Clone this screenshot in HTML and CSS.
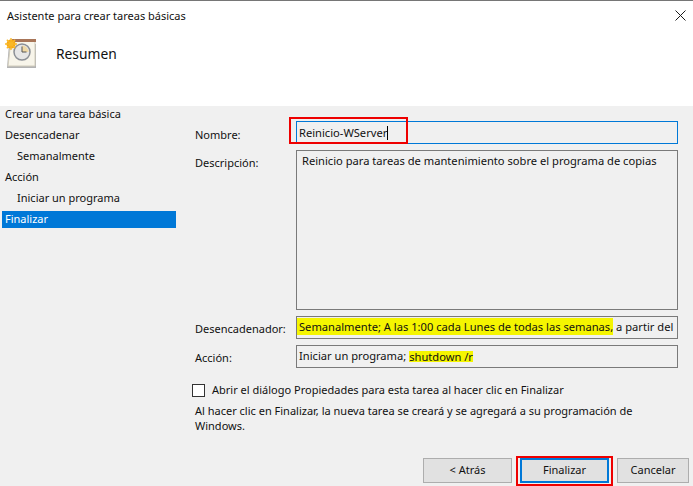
FILE: index.html
```html
<!DOCTYPE html>
<html lang="es">
<head>
<meta charset="utf-8">
<title>Asistente para crear tareas básicas</title>
<link rel="stylesheet" href="styles.css">
</head>
<body>
<div class="window">
  <header class="head">
    <div class="titlebar">
      <span class="title">Asistente para crear tareas básicas</span>
      <svg class="close" width="11" height="11" viewBox="0 0 11 11"><path d="M.5.5l10 10M10.500.5l-10 10" stroke="#1a1a1a" fill="none"/></svg>
    </div>
    <div class="banner">
      <svg class="task-icon" width="32" height="34" viewBox="0 0 32 34">
        <path d="M4 8h27v24H2z" fill="#b3b3b3"/>
        <path d="M6 4h24v26H3z" fill="#f8f5ea" stroke="#d2cdbd"/>
        <rect x="7" y="3" width="24" height="3" fill="#a87558"/>
        <circle cx="17" cy="16" r="8" fill="#e6e6e6" stroke="#8b8f96" stroke-width="1.500"/>
        <path d="M17 16V9.500A6.500 6.500 0 0 1 23.500 16z" fill="#f0d9a6"/>
        <path d="M17 10.500V16h4.500" stroke="#555" fill="none"/>
        <circle cx="6" cy="8" r="4.500" fill="#f9a70f"/>
        <path d="M6 2v12M0 8h12M1.800 3.800l8.400 8.400M10.200 3.800l-8.400 8.400" stroke="#f9b928" stroke-width="1.300"/>
      </svg>
      <h1 class="heading">Resumen</h1>
    </div>
  </header>
  <main class="body">
    <nav class="nav">
      <div class="nav-item">Crear una tarea básica</div>
      <div class="nav-item">Desencadenar</div>
      <div class="nav-item sub">Semanalmente</div>
      <div class="nav-item">Acción</div>
      <div class="nav-item sub">Iniciar un programa</div>
      <div class="nav-item active">Finalizar</div>
    </nav>
    <section class="content">
      <div class="form">
        <label class="lbl lbl-name">Nombre:</label>
        <div class="field field-name">Reinicio-WServer<span class="caret"></span><span class="mark-name"></span></div>
        <label class="lbl">Descripción:</label>
        <div class="field field-desc">Reinicio para tareas de mantenimiento sobre el programa de copias</div>
        <label class="lbl lbl-trigger">Desencadenador:</label>
        <div class="field field-line"><mark class="hl hl-trigger">Semanalmente; A las 1:00 cada Lunes de todas las semanas,</mark> a partir del</div>
        <label class="lbl lbl-action">Acción:</label>
        <div class="field field-line field-action">Iniciar un programa; <mark class="hl hl-action">shutdown /r</mark></div>
      </div>
      <div class="check-row"><span class="check"></span><span>Abrir el diálogo Propiedades para esta tarea al hacer clic en Finalizar</span></div>
      <p class="note">Al hacer clic en Finalizar, la nueva tarea se creará y se agregará a su programación de Windows.</p>
      <div class="buttons">
        <div class="btn btn-wide">&lt; Atrás</div>
        <div class="btn btn-wide btn-primary">Finalizar<span class="mark-btn"></span></div>
        <div class="btn btn-cancel">Cancelar</div>
      </div>
    </section>
  </main>
</div>
</body>
</html>
```
FILE: styles.css
```css
* { box-sizing: border-box; }
html, body { margin: 0; height: 100%; }
body { font: 11px/16px "Noto Sans", "Open Sans", sans-serif; color: #111; background: #f0f0f0; overflow: hidden; }
.window { width: 693px; height: 486px; display: flex; flex-direction: column; overflow: hidden; }
.head { height: 106px; background: #fff; border-top: 1px solid #767676; flex: none; }
.titlebar { display: flex; justify-content: space-between; align-items: flex-start; padding: 7px 3px 0 7px; height: 30px; }
.close { margin: 2px 4px 0 0; }
.banner { display: flex; align-items: flex-start; padding: 5px 0 0 5px; }
.task-icon { flex: none; }
.heading { margin: 8px 0 0 19px; font-size: 13.800px; line-height: 20px; font-weight: 400; }
.body { flex: 1; display: flex; min-height: 0; }
.nav { width: 174px; margin-left: 2px; flex: none; }
.nav-item { height: 21px; padding: 0 3px; line-height: 16px; }
.nav-item.sub { padding-left: 15px; }
.nav-item.active { height: 17px; line-height: 15px; background: #0078d7; color: #fff; }
.content { flex: 1; padding: 15px 15px 0 19px; min-width: 0; display: flex; flex-direction: column; }
.form { display: grid; grid-template-columns: 101px 382px; grid-template-rows: 23px 160px 23px 23px; row-gap: 6px; }
.lbl { padding: 5px 0 0 0; }
.lbl-name { padding-top: 6px; }
.lbl-trigger { padding-top: 5px; }
.lbl-action { padding-top: 5px; }
.field { border: 1px solid #7a7a7a; padding: 2px; background: #f0f0f0; white-space: nowrap; overflow: hidden; font-size: 11.150px; }
.field-desc { padding: 2px 5px; white-space: normal; }
.field-line { padding: 1px 0 0 0; line-height: 18px; }
.field-action { padding-left: 2px; line-height: 16px; padding-top: 2px; }
.field-name { border-color: #0078d7; position: relative; overflow: visible; line-height: 17px; }
.caret { display: inline-block; width: 1px; height: 14px; background: #000; vertical-align: -3px; }
.hl { background: #f5f500; color: inherit; }
.hl-trigger { padding: 1px 0 1px 2px; }
.hl-action { display: inline-block; height: 11px; line-height: 12px; vertical-align: -1px; }
.mark-name { position: absolute; left: -8px; top: -5px; width: 119px; height: 27px; border: 2px solid #ee0000; }
.check-row { display: flex; align-items: center; gap: 7px; margin: 14px 0 0 -3px; height: 16px; }
.check { width: 13px; height: 13px; border: 1px solid #333; background: #fff; flex: none; }
.note { margin: 6px 0 0; width: 460px; line-height: 14.500px; }
.buttons { display: flex; gap: 8px; margin-left: 228px; margin-top: 25px; }
.btn { height: 25px; line-height: 22px; text-align: center; background: #e1e1e1; border: 1px solid #adadad; position: relative; flex: none; }
.btn-wide { width: 89px; }
.btn-cancel { width: 72px; }
.btn-primary { border: 2px solid #0078d7; line-height: 20px; }
.mark-btn { position: absolute; left: -6px; top: -4px; width: 97px; height: 30px; border: 2px solid #ee0000; }
```
